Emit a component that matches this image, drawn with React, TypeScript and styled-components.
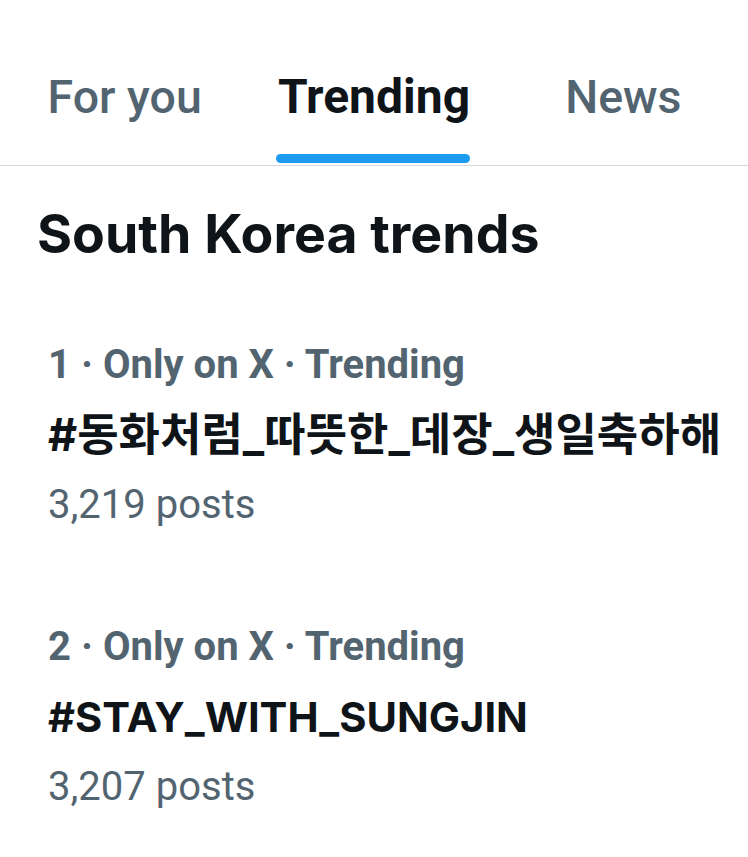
import React from "react";
import styled, { createGlobalStyle } from "styled-components";

const Global = createGlobalStyle`
  html, body { margin: 0; padding: 0; background: #ffffff; }
  body { font-family: Roboto, "Noto Sans CJK KR", sans-serif; color: #0f1419; }
`;

const Page = styled.div`
  width: 748px;
  min-height: 857px;
  background: #fff;
  overflow: hidden;
`;

const TabBar = styled.nav`
  display: flex;
  height: 165px;
  border-bottom: 1px solid #cfd9de;
`;

const Tab = styled.div`
  flex: 1;
  display: flex;
  justify-content: center;
`;

const TabInner = styled.div`
  display: flex;
  flex-direction: column;
  justify-content: space-between;
  align-items: stretch;
  padding-top: 68px;
`;

const TabLabel = styled.span<{ $active?: boolean }>`
  font-family: Roboto, sans-serif;
  font-size: ${(p) => (p.$active ? 48 : 46.5)}px;
  line-height: 58px;
  font-weight: ${(p) => (p.$active ? 700 : 500)};
  color: ${(p) => (p.$active ? "#0f1419" : "#536471")};
`;

const Indicator = styled.div`
  height: 9px;
  border-radius: 5px;
  background: #1d9bf0;
  margin: 0 0 2px -2px;
`;

const Heading = styled.h2`
  margin: 0;
  padding: 36px 0 0 37px;
  font-family: Inter, sans-serif;
  font-size: 53.6px;
  line-height: 64px;
  font-weight: 700;
  color: #0f1419;
`;

const TrendList = styled.div`
  display: flex;
  flex-direction: column;
  gap: 72px;
  padding: 64px 0 0 48px;
`;

const Trend = styled.div`
  display: flex;
  flex-direction: column;
`;

const Meta = styled.div`
  font-family: Roboto, sans-serif;
  font-size: 40px;
  line-height: 70px;
  font-weight: 700;
  color: #536471;
`;

const Tag = styled.div<{ $cjk?: boolean }>`
  font-family: Inter, "Noto Sans CJK KR", sans-serif;
  font-size: ${(p) => (p.$cjk ? 45 : 41.7)}px;
  line-height: 70px;
  font-weight: 700;
  color: #0f1419;
  white-space: nowrap;
`;

const Posts = styled.div`
  font-family: Roboto, sans-serif;
  font-size: 40px;
  line-height: 70px;
  font-weight: 400;
  color: #536471;
`;

const trends = [
  { meta: "1 · Only on X · Trending", tag: "#동화처럼_따뜻한_데장_생일축하해", posts: "3,219 posts", cjk: true },
  { meta: "2 · Only on X · Trending", tag: "#STAY_WITH_SUNGJIN", posts: "3,207 posts", cjk: false },
];

export default function App() {
  return (
    <Page>
      <Global />
      <TabBar>
        <Tab>
          <TabInner>
            <TabLabel>For you</TabLabel>
          </TabInner>
        </Tab>
        <Tab>
          <TabInner>
            <TabLabel $active>Trending</TabLabel>
            <Indicator />
          </TabInner>
        </Tab>
        <Tab>
          <TabInner>
            <TabLabel>News</TabLabel>
          </TabInner>
        </Tab>
      </TabBar>
      <Heading>South Korea trends</Heading>
      <TrendList>
        {trends.map((t) => (
          <Trend key={t.tag}>
            <Meta>{t.meta}</Meta>
            <Tag $cjk={t.cjk}>{t.tag}</Tag>
            <Posts>{t.posts}</Posts>
          </Trend>
        ))}
      </TrendList>
    </Page>
  );
}
